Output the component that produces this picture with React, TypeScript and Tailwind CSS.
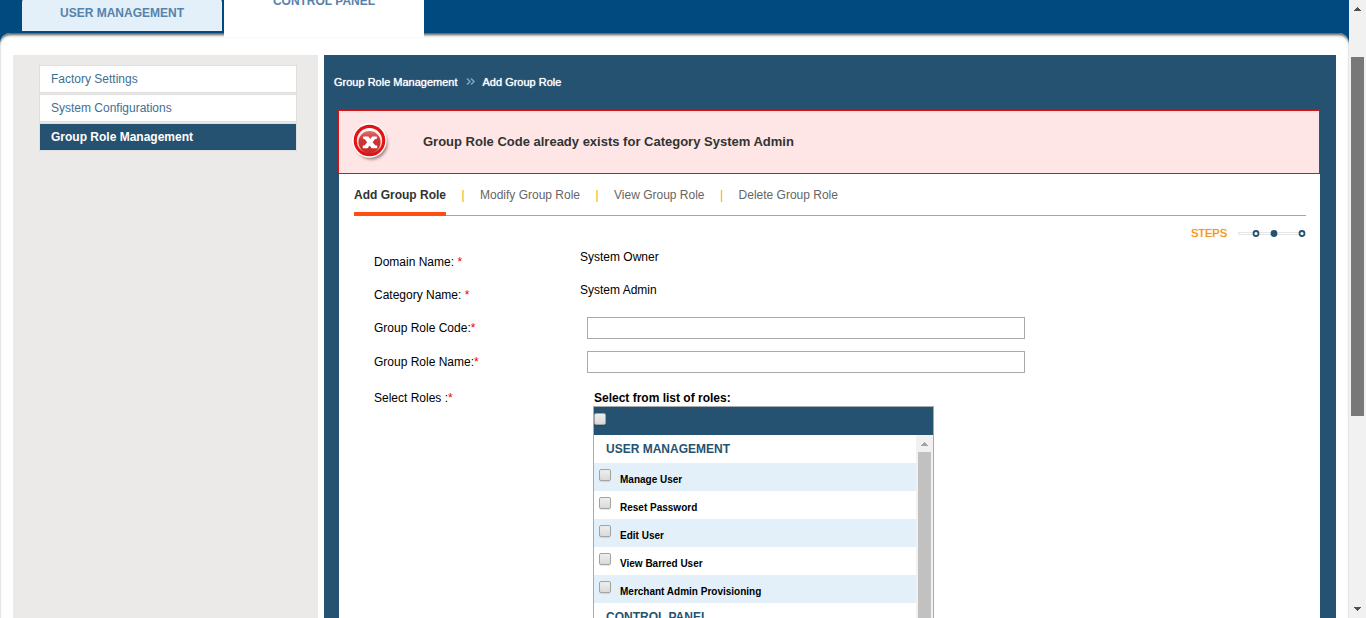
import React from "react";

const menu = ["Factory Settings", "System Configurations", "Group Role Management"];
const actions = ["Add Group Role", "Modify Group Role", "View Group Role", "Delete Group Role"];
const roles = ["Manage User", "Reset Password", "Edit User", "View Barred User", "Merchant Admin Provisioning"];

const checkbox =
  "block h-3 w-3 shrink-0 appearance-none rounded-[2px] border border-[#a3a3a3] bg-linear-to-b from-[#eeeeee] to-[#dadada] shadow-[0_1px_1px_#0000001a] checked:bg-[#265272]";

function Arrow({ down = false, color }: { down?: boolean; color: string }) {
  return (
    <svg width="17" height="17" viewBox="0 0 17 17" className="block shrink-0" aria-hidden="true" shapeRendering="crispEdges">
      <path d={down ? "M5 6h7v1H5zM6 7h5v1H6zM7 8h3v1H7zM8 9h1v1H8z" : "M8 7h1v1H8zM7 8h3v1H7zM6 9h5v1H6zM5 10h7v1H5z"} fill={color} />
    </svg>
  );
}

function ErrorIcon() {
  return (
    <svg width="44" height="44" viewBox="0 0 44 44" className="block shrink-0" aria-hidden="true">
      <defs>
        <linearGradient id="core" x1="0" y1="0" x2="0" y2="1">
          <stop offset="0" stopColor="#df7070" />
          <stop offset="0.4" stopColor="#cf3434" />
          <stop offset="1" stopColor="#c92a2a" />
        </linearGradient>
        <linearGradient id="halo" x1="0" y1="0" x2="0" y2="1">
          <stop offset="0" stopColor="#fff" />
          <stop offset="0.75" stopColor="#f6c4c4" />
          <stop offset="1" stopColor="#e01515" />
        </linearGradient>
        <filter id="soft" x="-20%" y="-20%" width="140%" height="140%">
          <feGaussianBlur stdDeviation="1.4" />
        </filter>
      </defs>
      <circle cx="22.5" cy="23.5" r="16" fill="#6b4a4a" opacity="0.65" filter="url(#soft)" />
      <circle cx="20.5" cy="20.5" r="17.2" fill="#fff" />
      <circle cx="20.5" cy="20.5" r="15.8" fill="#e31313" />
      <circle cx="20.5" cy="20.8" r="12.7" fill="url(#halo)" />
      <circle cx="20.5" cy="22" r="11" fill="url(#core)" />
      <path
        d="M14.2 16.5h5.2l1.8 2.6 2-2.6h4.6v2.6h-1.6l-2.7 3.1 3 3.4h1.7v2.6h-5.6l-2-2.7-2 2.7h-4.8v-2.6h1.6l2.8-3.4-2.7-3.1h-1.3z"
        fill="#fff"
      />
    </svg>
  );
}

function FormRow({ id, label, children, className }: { id?: string; label: string; children: React.ReactNode; className: string }) {
  const text = (
    <>
      {label}
      <span className="text-[#f00000]">*</span>
    </>
  );
  return (
    <div className={`flex ${className}`}>
      {id ? (
        <label htmlFor={id} className="w-[206px] shrink-0 whitespace-pre">{text}</label>
      ) : (
        <div className="w-[206px] shrink-0 whitespace-pre">{text}</div>
      )}
      {children}
    </div>
  );
}

export default function App() {
  return (
    <div className="flex h-screen overflow-hidden bg-white font-['Liberation_Sans',Arial,sans-serif] text-[12px] leading-4 text-black">
      <div className="flex min-w-0 flex-1 flex-col bg-[#004a7f]">
        <nav className="z-10 flex h-[33px] shrink-0 items-end gap-0.5 pl-[22px] font-bold text-[#5682ab]">
          <a href="#users" className="mb-0.5 flex h-9 w-[200px] items-center justify-center rounded-t-lg bg-[#e3f0fa]">
            USER MANAGEMENT
          </a>
          <a href="#control" className="-mb-1 flex h-[72px] w-[200px] items-center justify-center rounded-t-lg bg-white">
            CONTROL PANEL
          </a>
        </nav>

        <div className="flex flex-1 gap-1.5 rounded-t-[10px] bg-white px-[13px] pt-[22px] shadow-[inset_0_3px_3px_-1px_#555555]">
          <aside className="w-[305px] shrink-0 bg-[#ebeae8] px-[21px] pt-2.5 pl-[26px]">
            <ul className="flex flex-col gap-px">
              {menu.map((item, i) => (
                <li key={item}>
                  <a
                    href="#menu"
                    className={
                      i === 2
                        ? "flex h-7 items-center border border-[#dfdedc] bg-[#265272] pl-[11px] font-bold text-white"
                        : "flex h-7 items-center border border-[#dfdedc] bg-white pl-[11px] text-[#41708f]"
                    }
                  >
                    {item}
                  </a>
                </li>
              ))}
            </ul>
          </aside>

          <main className="min-w-0 flex-1 bg-[#265272] pr-4 pl-3.5">
            <div className="-ml-1 flex h-[55px] items-center pb-0.5 text-[11px] text-white [text-shadow:0_0_1px_#ffffff]">
              <span>Group Role Management</span>
              <svg width="9" height="7" viewBox="0 0 9 7" className="mx-2" fill="none" stroke="#7fa3c4" strokeWidth="1.5" aria-hidden="true">
                <path d="M1 .5l3 3-3 3M5 .5l3 3-3 3" />
              </svg>
              <span>Add Group Role</span>
            </div>

            <div role="alert" className="flex h-16 items-center border border-[#dd1111] bg-[#fee6e6] pl-2.5 text-[13px] font-bold text-[#333333]">
              <ErrorIcon />
              <p className="ml-[30px]">Group Role Code already exists for Category System Admin</p>
            </div>

            <div className="ml-px h-[500px] bg-white pr-3.5 pl-[15px]">
              <div className="flex h-[42px] items-stretch border-b border-[#f7931e] text-[#666666]">
                {actions.map((a, i) => (
                  <React.Fragment key={a}>
                    {i > 0 && <span className="w-[34px] pt-[13px] text-center text-[#f9a11b]">|</span>}
                    <a
                      href="#action"
                      className={i === 0 ? "-mb-px border-b-4 border-[#ff4e14] pt-[13px] font-bold text-[#333333]" : "pt-[13px]"}
                    >
                      {a}
                    </a>
                  </React.Fragment>
                ))}
              </div>

              <div className="flex h-[29px] items-center justify-end gap-[11px] pt-1.5 text-[11px] text-[#f7931e] [text-shadow:0_0_1px_#f7931e]">
                <span className="pb-0.5">STEPS</span>
                <svg width="68" height="9" viewBox="0 0 68 9" aria-hidden="true">
                  <rect x="0" y="3" width="65" height="3" fill="#e6e6e6" />
                  <rect x="1" y="4" width="63" height="1" fill="#ffffff" />
                  <circle cx="18" cy="4.5" r="2.5" fill="#fff" stroke="#265272" strokeWidth="1.8" />
                  <circle cx="36" cy="4.5" r="3.4" fill="#265272" />
                  <circle cx="64" cy="4.5" r="2.5" fill="#fff" stroke="#265272" strokeWidth="1.8" />
                </svg>
              </div>

              <form className="pl-5">
                <FormRow label="Domain Name: " className="h-[33px] items-center">
                  <span className="pb-2.5">System Owner</span>
                </FormRow>
                <FormRow label="Category Name: " className="h-[33px] items-center">
                  <span className="pb-2.5">System Admin</span>
                </FormRow>
                <FormRow id="code" label="Group Role Code:" className="h-[34px] items-center">
                  <input id="code" type="text" className="ml-[7px] h-[22px] w-[438px] border border-[#aaaaaa] bg-white px-1 outline-none" />
                </FormRow>
                <FormRow id="name" label="Group Role Name:" className="h-[34px] items-center">
                  <input id="name" type="text" className="ml-[7px] h-[22px] w-[438px] border border-[#aaaaaa] bg-white px-1 outline-none" />
                </FormRow>
                <FormRow label="Select Roles :" className="items-start pt-[11px]">
                  <fieldset className="ml-[13px] w-[341px]">
                    <legend className="pl-px font-bold">Select from list of roles:</legend>
                    <div className="h-[300px] overflow-hidden border border-[#aaaaaa]">
                      <div className="h-7 bg-[#265272] pt-1.5">
                        <input type="checkbox" aria-label="Select all roles" className={checkbox} />
                      </div>
                      <div className="flex">
                        <div className="flex-1">
                          <h2 className="flex h-7 items-center pl-3 font-bold text-[#265272]">USER MANAGEMENT</h2>
                          {roles.map((r) => (
                            <label key={r} className="flex h-7 gap-[9px] pt-1.5 pl-[5px] text-[10px] font-bold odd:bg-white even:bg-[#e3f0fa]">
                              <input type="checkbox" className={checkbox} />
                              <span className="pt-[3px]">{r}</span>
                            </label>
                          ))}
                          <h2 className="flex h-7 items-center pl-3 font-bold text-[#265272]">CONTROL PANEL</h2>
                        </div>
                        <div className="flex w-[17px] flex-col items-center bg-[#f1f1f1]">
                          <Arrow color="#a3a3a3" />
                          <div className="h-[260px] w-[13px] bg-[#c1c1c1]" />
                        </div>
                      </div>
                    </div>
                  </fieldset>
                </FormRow>
              </form>
            </div>
          </main>
        </div>
      </div>

      <div className="flex w-[17px] shrink-0 flex-col items-center justify-between bg-[#f1f1f1]">
        <Arrow color="#505050" />
        <div className="flex w-[13px] flex-1 flex-col pt-10">
          <div className="h-[66%] bg-[#787878]" />
        </div>
        <Arrow down color="#505050" />
      </div>
    </div>
  );
}
